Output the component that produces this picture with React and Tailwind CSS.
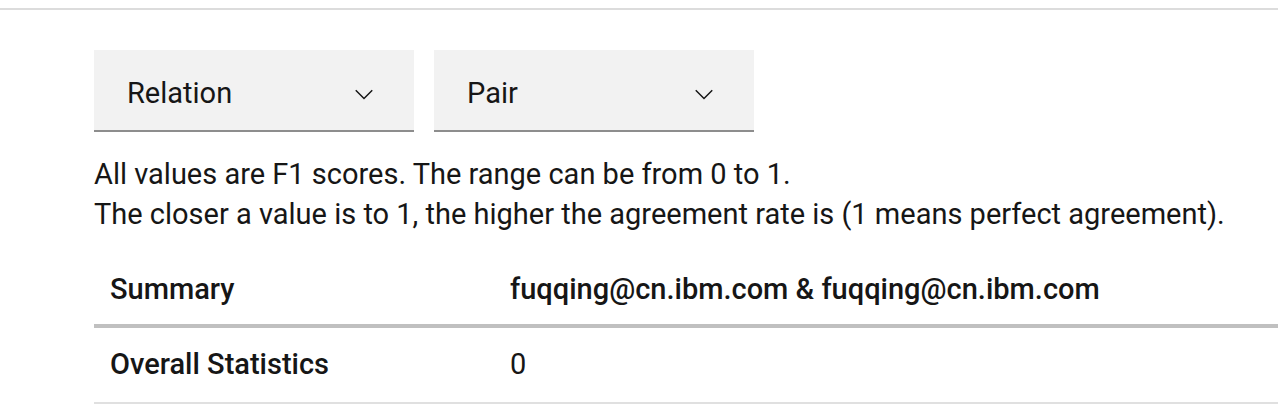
import React from "react";

function Chevron() {
    return (
        <svg className="w-[24px] h-[24px]" viewBox="0 0 16 16" fill="none" stroke="#161616" strokeWidth={1}>
            <path d="M2.5 5.5l5.5 5.5 5.5-5.5" />
        </svg>
    );
}

function Select({ label }) {
    return (
        <div className="w-[320px] h-[82px] bg-[#f2f2f2] border-b-2 border-[#8d8d8d] flex items-center justify-between pl-[33px] pr-[38px] pt-[8px]">
            <span className="text-[29px] text-[#161616]">{label}</span>
            <Chevron />
        </div>
    );
}

export default function App() {
    return (
        <div className="w-[1278px] h-[420px] bg-white overflow-hidden font-['Roboto',sans-serif] text-[#161616]">
            <div className="h-[8px]" />
            <div className="h-[2px] bg-[#dcdcdc]" />
            <div className="pl-[94px]">
                <div className="flex gap-[20px] mt-[40px]">
                    <Select label="Relation" />
                    <Select label="Pair" />
                </div>
                <div className="mt-[22px] text-[29px] leading-[40px]">
                    <p>All values are F1 scores. The range can be from 0 to 1.</p>
                    <p>The closer a value is to 1, the higher the agreement rate is (1 means perfect agreement).</p>
                </div>
                <div className="mt-[22px]">
                    <div className="flex h-[72px] items-center border-b-4 border-[#c0c0c0] text-[29px] font-medium">
                        <div className="w-[416px] pl-[16px]">Summary</div>
                        <div>fuqqing@cn.ibm.com &amp; fuqqing@cn.ibm.com</div>
                    </div>
                    <div className="flex h-[76px] items-center border-b-2 border-[#e0e0e0] text-[29px]">
                        <div className="w-[416px] pl-[16px] font-medium">Overall Statistics</div>
                        <div>0</div>
                    </div>
                </div>
            </div>
        </div>
    );
}
